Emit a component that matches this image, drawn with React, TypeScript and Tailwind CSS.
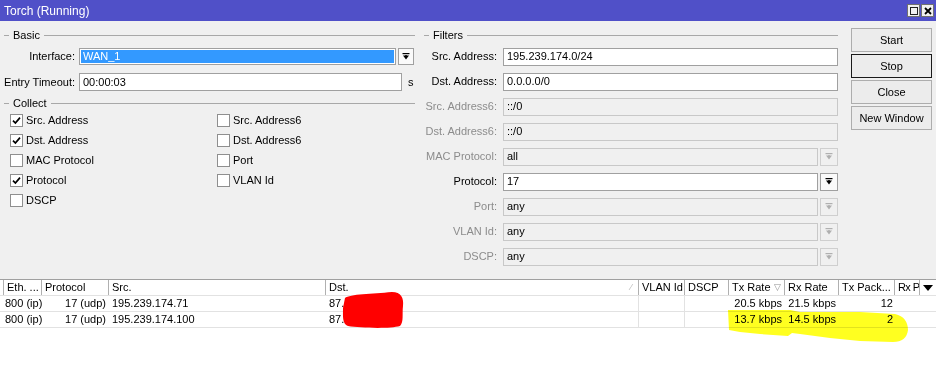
import React from 'react';

const font = { fontFamily: '"Liberation Sans", Arial, sans-serif' };

function GroupHeader({ title, className = '' }: { title: string; className?: string }) {
  return (
    <div className={`flex h-[14px] items-center ${className}`}>
      <span className="h-px w-[5px] bg-[#a8a8a8]" />
      <span className="px-[4px] text-[#000]">{title}</span>
      <span className="h-px flex-1 bg-[#a8a8a8]" />
    </div>
  );
}

function DropArrow({ disabled = false }: { disabled?: boolean }) {
  const c = disabled ? '#b0b0b0' : '#000';
  return (
    <svg width="8" height="8" viewBox="0 0 8 8">
      <rect x="0.5" y="0" width="7" height="1.2" fill={c} />
      <polygon points="1,2.5 7,2.5 4,6.5" fill={c} />
      <rect x="3.3" y="2" width="1.4" height="2.5" fill={c} />
    </svg>
  );
}

function DropButton({ disabled = false }: { disabled?: boolean }) {
  return (
    <div
      className={`ml-[2px] flex h-[18px] w-[18px] items-center justify-center border ${
        disabled ? 'border-[#cfcfcf] bg-[#f0f0f0]' : 'border-[#a0a0a0] bg-[#fafafa]'
      }`}
    >
      <DropArrow disabled={disabled} />
    </div>
  );
}

function Checkbox({ checked, label }: { checked: boolean; label: string }) {
  return (
    <div className="flex h-[20px] items-center">
      <div className="flex h-[13px] w-[13px] items-center justify-center border border-[#8f8f8f] bg-white">
        {checked && (
          <svg width="9" height="9" viewBox="0 0 9 9">
            <path d="M1 4.6 L3.4 7 L8 1.6" stroke="#000" strokeWidth="1.7" fill="none" />
          </svg>
        )}
      </div>
      <span className="ml-[3px]">{label}</span>
    </div>
  );
}

type Filter = { label: string; value: string; disabled: boolean; drop: boolean };

const filters: Filter[] = [
  { label: 'Src. Address:', value: '195.239.174.0/24', disabled: false, drop: false },
  { label: 'Dst. Address:', value: '0.0.0.0/0', disabled: false, drop: false },
  { label: 'Src. Address6:', value: '::/0', disabled: true, drop: false },
  { label: 'Dst. Address6:', value: '::/0', disabled: true, drop: false },
  { label: 'MAC Protocol:', value: 'all', disabled: true, drop: true },
  { label: 'Protocol:', value: '17', disabled: false, drop: true },
  { label: 'Port:', value: 'any', disabled: true, drop: true },
  { label: 'VLAN Id:', value: 'any', disabled: true, drop: true },
  { label: 'DSCP:', value: 'any', disabled: true, drop: true },
];

const columns = [
  { name: 'Eth. ...', w: 'w-[39px] border-l' },
  { name: 'Protocol', w: 'w-[67px]' },
  { name: 'Src.', w: 'w-[217px]' },
  { name: 'Dst.', w: 'w-[313px]' },
  { name: 'VLAN Id', w: 'w-[46px]' },
  { name: 'DSCP', w: 'w-[44px]' },
  { name: 'Tx Rate', w: 'w-[56px]' },
  { name: 'Rx Rate', w: 'w-[54px]' },
  { name: 'Tx Pack...', w: 'w-[56px]' },
  { name: 'Rx Pa', w: 'w-[25px] tracking-[-0.6px]' },
];

const rows = [
  { eth: '800 (ip)', proto: '17 (udp)', src: '195.239.174.71', dst: '87.', tx: '20.5 kbps', rx: '21.5 kbps', txp: '12' },
  { eth: '800 (ip)', proto: '17 (udp)', src: '195.239.174.100', dst: '87.', tx: '13.7 kbps', rx: '14.5 kbps', txp: '2' },
];

export default function App() {
  return (
    <div className="relative h-[377px] w-[936px] overflow-hidden bg-white text-[11px] leading-none text-black" style={font}>
      {/* Title bar */}
      <div className="flex h-[21px] items-center justify-between bg-[#5050c8] pl-[4px] pr-[2px]">
        <span className="text-[12px] text-white">Torch (Running)</span>
        <div className="flex gap-[1px]">
          <div className="flex h-[13px] w-[13px] items-center justify-center border border-[#707070] bg-[#f0f0f0]">
            <div className="h-[8px] w-[8px] border border-[#202020]" />
          </div>
          <div className="flex h-[13px] w-[13px] items-center justify-center border border-[#707070] bg-[#f0f0f0]">
            <svg width="8" height="8" viewBox="0 0 8 8">
              <path d="M1 1 L7 7 M7 1 L1 7" stroke="#000" strokeWidth="1.8" />
            </svg>
          </div>
        </div>
      </div>

      {/* Body */}
      <div className="flex h-[258px] bg-[#f0f0f0]">
        {/* Basic + Collect */}
        <div className="w-[418px] pl-[4px] pr-[3px] pt-[7px]">
          <GroupHeader title="Basic" />
          <div className="mt-[6px] flex h-[17px] items-center">
            <span className="w-[71px] text-right">Interface:</span>
            <div className="ml-[4px] flex h-[17px] w-[317px] items-center border border-[#a0a0a0] bg-white p-[1px]">
              <div className="flex h-full w-full items-center bg-[#3399ff] pl-[2px] text-white">WAN_1</div>
            </div>
            <div className="ml-[2px] flex h-[17px] w-[16px] items-center justify-center border border-[#a0a0a0] bg-[#fafafa]">
              <DropArrow />
            </div>
          </div>
          <div className="mt-[8px] flex h-[18px] items-center">
            <span className="w-[71px] text-right">Entry Timeout:</span>
            <div className="ml-[4px] flex h-[18px] w-[323px] items-center border border-[#a0a0a0] bg-white pl-[3px]">00:00:03</div>
            <span className="ml-[6px]">s</span>
          </div>
          <GroupHeader title="Collect" className="mt-[5px]" />
          <div className="grid grid-cols-[207px_1fr] pl-[6px]">
            <Checkbox checked label="Src. Address" />
            <Checkbox checked={false} label="Src. Address6" />
            <Checkbox checked label="Dst. Address" />
            <Checkbox checked={false} label="Dst. Address6" />
            <Checkbox checked={false} label="MAC Protocol" />
            <Checkbox checked={false} label="Port" />
            <Checkbox checked label="Protocol" />
            <Checkbox checked={false} label="VLAN Id" />
            <Checkbox checked={false} label="DSCP" />
          </div>
        </div>

        {/* Filters */}
        <div className="w-[424px] pl-[6px] pr-[4px] pt-[7px]">
          <GroupHeader title="Filters" />
          <div className="mt-[2px]">
            {filters.map((f) => (
              <div key={f.label} className="flex h-[25px] items-center">
                <span className={`w-[73px] text-right ${f.disabled ? 'text-[#8c8c8c]' : 'text-black'}`}>{f.label}</span>
                <div
                  className={`ml-[6px] flex h-[18px] ${f.drop ? 'w-[315px]' : 'w-[335px]'} items-center border pl-[3px] ${
                    f.disabled ? 'border-[#c8c8c8] bg-[#f0f0f0]' : 'border-[#a0a0a0] bg-white'
                  }`}
                >
                  {f.value}
                </div>
                {f.drop && <DropButton disabled={f.disabled} />}
              </div>
            ))}
          </div>
        </div>

        {/* Buttons */}
        <div className="ml-[9px] flex w-[81px] flex-col gap-[2px] pt-[7px]">
          {['Start', 'Stop', 'Close', 'New Window'].map((b) => (
            <div
              key={b}
              className={`flex h-[24px] items-center justify-center border bg-[#ececec] ${
                b === 'Stop' ? 'border-[#1a1a1a]' : 'border-[#adadad]'
              }`}
            >
              {b}
            </div>
          ))}
        </div>
      </div>

      {/* Table */}
      <div className="bg-white">
        <div className="flex h-[17px] border-t border-b border-[#a0a0a0] border-b-[#e2e2e2]">
          <div className="w-[3px] shrink-0" />
          {columns.map((c) => (
            <div key={c.name} className={`relative flex ${c.w} shrink-0 items-center overflow-hidden whitespace-nowrap border-r border-[#b0b0b0] pl-[3px]`}>
              {c.name}
              {c.name === 'Tx Rate' && <span className="ml-[3px] text-[9px] text-[#909090]">▽</span>}
              {c.name === 'Dst.' && <span className="absolute right-[6px] text-[9px] text-[#b8b8b8]">⁄</span>}
            </div>
          ))}
          <div className="flex w-[16px] shrink-0 items-center justify-center">
            <svg width="10" height="6" viewBox="0 0 10 6">
              <polygon points="0,0 10,0 5,6" fill="#000" />
            </svg>
          </div>
        </div>
        {rows.map((r, i) => (
          <div key={i} className="flex h-[16px] whitespace-nowrap border-b border-[#e2e2e2]">
            <div className="w-[3px] shrink-0" />
            <div className="flex w-[39px] shrink-0 items-center pl-[2px]">{r.eth}</div>
            <div className="flex w-[67px] shrink-0 items-center justify-end pr-[3px]">{r.proto}</div>
            <div className="flex w-[217px] shrink-0 items-center pl-[3px]">{r.src}</div>
            <div className="flex w-[313px] shrink-0 items-center border-r border-[#e2e2e2] pl-[3px]">{r.dst}</div>
            <div className="w-[46px] shrink-0 border-r border-[#e2e2e2]" />
            <div className="w-[44px] shrink-0" />
            <div className="flex w-[56px] shrink-0 items-center justify-end pr-[3px]">{r.tx}</div>
            <div className="flex w-[54px] shrink-0 items-center justify-end pr-[3px]">{r.rx}</div>
            <div className="flex w-[56px] shrink-0 items-center justify-end pr-[2px]">{r.txp}</div>
          </div>
        ))}
      </div>

      {/* Annotations drawn over the screenshot */}
      <svg className="pointer-events-none absolute left-0 top-0" width="936" height="377">
        <path
          d="M345 298 C350 294 372 294 392 292 C401 292 404 298 403 306 C402 314 404 322 400 326 C390 329 360 328 348 326 C342 324 343 316 343 308 Z"
          fill="#ff0000"
        />
      </svg>
      <svg className="pointer-events-none absolute left-0 top-0 mix-blend-multiply" width="936" height="377">
        <path
          d="M728 310 L790 310 L800 312 L860 312 L895 314 C904 316 908 322 908 330 C907 338 902 342 893 342 L860 341 L830 338 L800 334 L792 333 L788 336 L760 334 L740 332 L729 330 Z"
          fill="#ffff20"
        />
      </svg>
    </div>
  );
}
